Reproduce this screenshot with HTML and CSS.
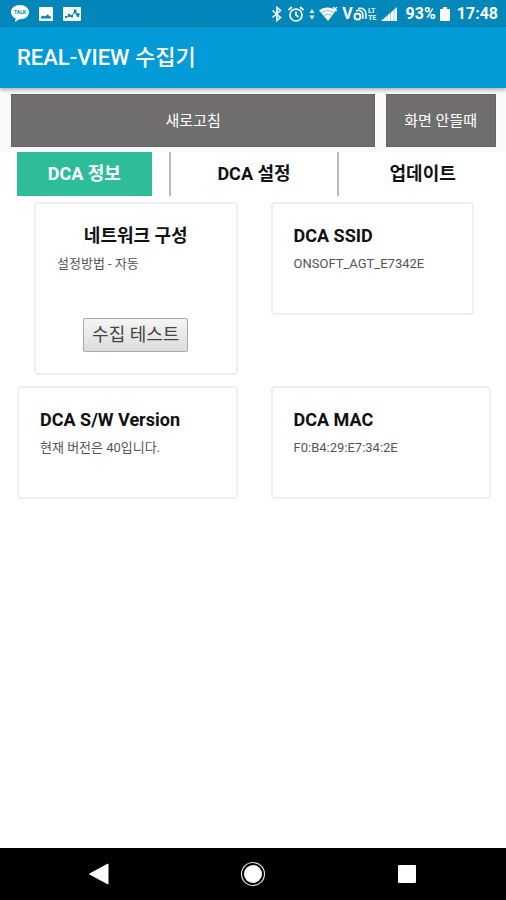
FILE: index.html
```html
<!DOCTYPE html>
<html lang="ko">
<head>
    <meta charset="UTF-8">
    <meta name="viewport" content="width=device-width, initial-scale=1.0">
    <title>REAL-VIEW 수집기</title>
    <link rel="stylesheet" href="styles.css">
</head>
<body>
    <div class="status-bar">
        <div class="status-left">
            <svg width="20" height="20" viewBox="0 0 20 20">
                <path d="M10 1C4.800 1 1 4 1 8.300c0 3 1.900 5.200 4.600 6.300L5 18l4.200-2.700H10c5.200 0 9-2.800 9-7S15.200 1 10 1z" fill="#fff"/>
                <text class="talk" x="10" y="10" text-anchor="middle">TALK</text>
            </svg>
            <svg width="16" height="16" viewBox="0 0 16 16">
                <rect x="1" y="1" width="14" height="14" rx="1" fill="#fff"/>
                <path d="M3 12.500V11l2-1.500 2 1 2.500-2L13 11v1.500z" fill="#0287ba"/>
            </svg>
            <svg width="20" height="16" viewBox="0 0 20 16">
                <rect x="1" y="1" width="18" height="14" rx="1" fill="#fff"/>
                <path d="M3 11.500l4-2 2.500 1L13 5l2 5 3-2" fill="none" stroke="#0287ba" stroke-width="1"/>
                <path d="M3 10h2v2H3zM6 8h2.500v3H6zM9 9h2v2.500H9zM12 3.500h2.500v4H12zM15 7h2v4h-2z" fill="#0287ba"/>
            </svg>
        </div>
        <div class="status-right">
            <svg width="12" height="16" viewBox="0 0 12 16">
                <path d="M1.500 4.500l8 7L6 14.500v-13l3.500 3-8 7" fill="none" stroke="#fff" stroke-width="1.600"/>
            </svg>
            <svg width="18" height="18" viewBox="0 0 18 18">
                <g fill="none" stroke="#fff" stroke-width="1.700">
                    <circle cx="9" cy="10" r="6"/>
                    <path d="M9 6.500V10l2.500 2M1.500 5l3.500-3M16.500 5L13 2"/>
                </g>
            </svg>
            <svg width="6" height="16" viewBox="0 0 6 16">
                <path d="M3 3l2.500 4h-5zM3 13.500L.5 9.500h5z" fill="#fff"/>
            </svg>
            <svg width="19" height="16" viewBox="0 0 19 16">
                <path d="M0 4.500C5 .5 12 .5 17 4.500L9 15z" fill="#fff"/>
                <path d="M2 7c4.500-3.200 9-3.200 13 0M4.500 10c3-2 6-2 8.500 0" fill="none" stroke="#0287ba" stroke-width=".5"/>
                <path d="M14 1l4 4m0-4l-4 4" stroke="#fff" stroke-width="1.200"/>
            </svg>
            <div class="volte">
                <span>V</span>
                <svg width="24" height="16" viewBox="0 0 24 16">
                    <g fill="none" stroke="#fff">
                        <circle cx="4.500" cy="10.500" r="3" stroke-width="2"/>
                        <path d="M3 5c4-2 7 1 7 4v4M5 2.500c5-1.500 8 2 8 6V13" stroke-width="1.500"/>
                    </g>
                    <text class="lte" x="15" y="7">LT</text>
                    <text class="lte" x="15" y="14">TE</text>
                </svg>
            </div>
            <svg class="signal" width="17" height="16" viewBox="0 0 17 16">
                <path d="M0 15L16 1v14z" fill="#fff"/>
                <path d="M6 8v7M9.500 5v10M13 2v13" stroke="#0287ba" stroke-width=".4"/>
            </svg>
            <span>93%</span>
            <svg width="10" height="16" viewBox="0 0 10 16">
                <path d="M0 3h3V1h4v2h3v12H0z" fill="#fff"/>
            </svg>
            <span class="clock">17:48</span>
        </div>
    </div>

    <header class="app-bar">
        <h1>REAL-VIEW 수집기</h1>
    </header>

    <main>
        <div class="toolbar">
            <button type="button" class="refresh-btn">새로고침</button>
            <button type="button" class="blank-btn">화면 안뜰때</button>
        </div>

        <nav class="tabs">
            <div class="tab"><a href="#info" class="active">DCA 정보</a></div>
            <div class="tab"><a href="#setting">DCA 설정</a></div>
            <div class="tab"><a href="#update">업데이트</a></div>
        </nav>

        <div class="cards" id="info">
            <section class="card card-network">
                <h2>네트워크 구성</h2>
                <p>설정방법 - 자동</p>
                <button type="button" class="test-btn">수집 테스트</button>
            </section>
            <section class="card card-ssid">
                <h2>DCA SSID</h2>
                <p>ONSOFT_AGT_E7342E</p>
            </section>
            <section class="card">
                <h2>DCA S/W Version</h2>
                <p>현재 버전은 40입니다.</p>
            </section>
            <section class="card">
                <h2>DCA MAC</h2>
                <p>F0:B4:29:E7:34:2E</p>
            </section>
        </div>
    </main>

    <footer class="nav-bar">
        <button type="button" aria-label="뒤로">
            <svg width="26" height="26" viewBox="0 0 26 26">
                <path d="M3.500 13L22 3v20z" fill="#fff" stroke="#fff" stroke-linejoin="round"/>
            </svg>
        </button>
        <button type="button" aria-label="홈">
            <svg width="26" height="26" viewBox="0 0 26 26">
                <circle cx="13" cy="13" r="11.500" fill="none" stroke="#ddd" stroke-width="1.200"/>
                <circle cx="13" cy="13" r="9" fill="#fff"/>
            </svg>
        </button>
        <button type="button" aria-label="최근 앱">
            <svg width="26" height="26" viewBox="0 0 26 26">
                <rect x="4" y="4" width="18" height="18" rx="1" fill="#fff"/>
            </svg>
        </button>
    </footer>
</body>
</html>
```
FILE: styles.css
```css
* {
    margin: 0;
    padding: 0;
    box-sizing: border-box;
}

body {
    font-family: Roboto, "Noto Sans CJK KR", sans-serif;
    background-color: #fff;
    color: #111;
    display: flex;
    flex-direction: column;
    min-height: 100vh;
}

button {
    font-family: inherit;
    cursor: pointer;
}

svg {
    display: block;
    flex: none;
}

/* Phone status bar */
.status-bar {
    display: flex;
    justify-content: space-between;
    align-items: center;
    height: 27px;
    padding: 0 8px 0 10px;
    background-color: #0287ba;
    color: #fff;
    font-size: 16px;
    font-weight: bold;
}

.status-left {
    display: flex;
    align-items: center;
    gap: 8px;
}

.status-right {
    display: flex;
    align-items: center;
    gap: 4px;
}

.status-right .signal {
    margin-right: 4px;
}

.clock {
    margin-left: 3px;
}

.talk {
    font-size: 5px;
    font-weight: bold;
    fill: #0287ba;
}

.volte {
    display: flex;
    align-items: center;
}

.lte {
    font-size: 7px;
    fill: #fff;
}

/* Title bar */
.app-bar {
    display: flex;
    align-items: center;
    height: 61px;
    padding: 0 17px;
    background-color: #039bd7;
    box-shadow: 0 2px 4px rgba(0, 0, 0, 0.3);
    z-index: 1;
}

.app-bar h1 {
    color: #fff;
    font-size: 22px;
    font-weight: 500;
    line-height: 30px;
}

main {
    flex: 1;
}

/* Top buttons */
.toolbar {
    display: flex;
    gap: 11px;
    padding: 6px 10px 5px 11px;
    background-color: #fafafa;
}

.toolbar button {
    height: 53px;
    border: 1px solid #666364;
    background-color: #706d6e;
    color: #fff;
    font-size: 15px;
    line-height: 20px;
}

.refresh-btn {
    flex: 1;
}

.toolbar .blank-btn {
    padding: 0 18px 0 17px;
}

/* Tab menu */
.tabs {
    display: grid;
    grid-template-columns: repeat(3, 1fr);
}

.tab {
    padding: 0 17px;
}

.tab + .tab {
    border-left: 2px solid #bbb;
}

.tab a {
    display: block;
    line-height: 44px;
    color: #111;
    font-size: 18px;
    font-weight: bold;
    text-align: center;
    text-decoration: none;
}

.tab .active {
    background-color: #2dbd9b;
    color: #fff;
}

/* Info cards */
.cards {
    display: grid;
    grid-template-columns: 1fr 1fr;
    align-items: start;
    gap: 11px 33px;
    padding: 6px 15px 0 17px;
}

.card {
    min-height: 113px;
    padding: 20px 21px;
    border: 2px solid #efefef;
    border-radius: 4px;
}

.card-network {
    margin-left: 17px;
    padding-bottom: 21px;
}

.card-ssid {
    margin-right: 17px;
}

.card h2 {
    font-size: 18px;
    line-height: 24px;
}

.card-network h2 {
    text-align: center;
}

.card p {
    margin-top: 6px;
    color: #555;
    font-size: 13px;
    line-height: 20px;
}

.test-btn {
    display: block;
    height: 34px;
    margin: 44px auto 0;
    padding: 0 8px;
    border: 1px solid #aaa;
    border-radius: 2px;
    background: linear-gradient(#f5f5f5, #dcdcdc);
    color: #444;
    font-size: 18px;
    line-height: 28px;
}

/* Phone navigation bar */
.nav-bar {
    display: flex;
    justify-content: space-around;
    align-items: center;
    height: 52px;
    padding: 0 22px;
    background-color: #000;
}

.nav-bar button {
    border: none;
    background: none;
}
```
